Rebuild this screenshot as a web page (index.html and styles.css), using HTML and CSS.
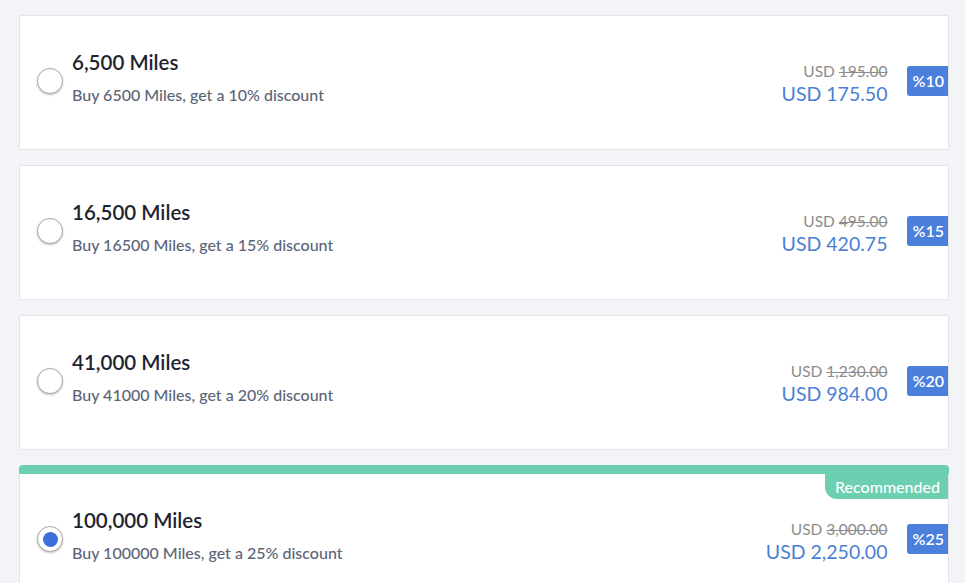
FILE: index.html
```html
<!DOCTYPE html>
<html>
<head>
<meta charset="utf-8">
<link rel="stylesheet" href="styles.css">
</head>
<body>
<div class="list">
  <div class="card">
    <div class="body">
      <span class="radio"></span>
      <div class="info">
        <div class="title">6,500 Miles</div>
        <div class="sub">Buy 6500 Miles, get a 10% discount</div>
      </div>
      <div class="prices">
        <div class="old">USD <s>195.00</s></div>
        <div class="new">USD 175.50</div>
      </div>
      <span class="badge">%10</span>
    </div>
  </div>
  <div class="card">
    <div class="body">
      <span class="radio"></span>
      <div class="info">
        <div class="title">16,500 Miles</div>
        <div class="sub">Buy 16500 Miles, get a 15% discount</div>
      </div>
      <div class="prices">
        <div class="old">USD <s>495.00</s></div>
        <div class="new">USD 420.75</div>
      </div>
      <span class="badge">%15</span>
    </div>
  </div>
  <div class="card">
    <div class="body">
      <span class="radio"></span>
      <div class="info">
        <div class="title">41,000 Miles</div>
        <div class="sub">Buy 41000 Miles, get a 20% discount</div>
      </div>
      <div class="prices">
        <div class="old">USD <s>1,230.00</s></div>
        <div class="new">USD 984.00</div>
      </div>
      <span class="badge">%20</span>
    </div>
  </div>
  <div class="card recommended">
    <div class="bar"></div>
    <span class="tag">Recommended</span>
    <div class="body">
      <span class="radio checked"></span>
      <div class="info">
        <div class="title">100,000 Miles</div>
        <div class="sub">Buy 100000 Miles, get a 25% discount</div>
      </div>
      <div class="prices">
        <div class="old">USD <s>3,000.00</s></div>
        <div class="new">USD 2,250.00</div>
      </div>
      <span class="badge">%25</span>
    </div>
  </div>
</div>
</body>
</html>
```
FILE: styles.css
```css
html, body {
  margin: 0;
  padding: 0;
  background: #f3f4f8;
  font-family: "Lato", "Noto Sans", sans-serif;
}
.list {
  display: flex;
  flex-direction: column;
  gap: 15px;
  padding: 15px 16px 0 19px;
  height: 583px;
  box-sizing: border-box;
  overflow: hidden;
}
.card {
  position: relative;
  background: #fff;
  border: 1px solid #e3e5ea;
  border-radius: 2px;
  flex-shrink: 0;
}
.body {
  height: 133px;
  display: flex;
  align-items: center;
  padding-left: 17px;
}
.radio {
  width: 24px;
  height: 24px;
  border-radius: 50%;
  border: 1px solid #a9a9a9;
  box-shadow: 0 1px 2px rgba(0,0,0,0.25);
  background: #fff;
  flex-shrink: 0;
  display: flex;
  align-items: center;
  justify-content: center;
  margin-top: -3px;
}
.radio.checked::after {
  content: "";
  width: 15px;
  height: 15px;
  border-radius: 50%;
  background: #3b6fdb;
}
.info {
  margin-left: 9px;
  flex: 1;
  display: flex;
  flex-direction: column;
  gap: 10px;
  margin-top: -12px;
}
.title {
  font-size: 20.5px;
  font-weight: 600;
  color: #1e2330;
  line-height: 26px;
}
.sub {
  font-size: 16px;
  font-weight: 500;
  color: #5b6577;
  line-height: 20px;
}
.prices {
  text-align: right;
  margin-right: 20px;
  display: flex;
  flex-direction: column;
  gap: 1px;
  margin-top: 1px;
}
.old {
  font-size: 15.5px;
  color: #8c8c8c;
  line-height: 20px;
}
.old s {
  text-decoration-thickness: 1px;
}
.new {
  font-size: 19.5px;
  color: #4a7fd4;
  line-height: 24px;
}
.badge {
  background: #4a7fdc;
  color: #fff;
  font-size: 16px;
  font-weight: 600;
  height: 30px;
  line-height: 30px;
  padding: 0 4px 0 5px;
  border-radius: 3px 0 0 3px;
  margin-top: -4px;
}
.recommended {
  border-top: none;
  border-radius: 4px 4px 0 0;
}
.bar {
  height: 9px;
  background: #6dcfb1;
  border-radius: 4px 4px 0 0;
  margin: 0 -1px;
}
.tag {
  position: absolute;
  top: 9px;
  right: 0;
  background: #6dcfb1;
  color: #fff;
  font-size: 16px;
  font-weight: 500;
  line-height: 25px;
  height: 25px;
  padding: 0 8px 0 10px;
  border-radius: 0 0 0 12px;
}
```
